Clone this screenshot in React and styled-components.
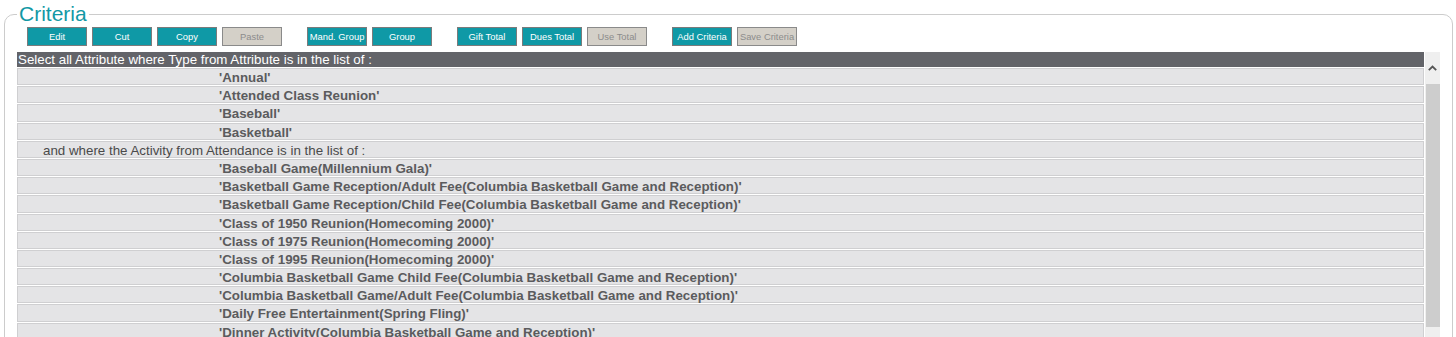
import styled, { createGlobalStyle } from "styled-components"

const Global = createGlobalStyle`
  html, body {
    margin: 0;
    background: #fff;
    overflow: hidden;
    font-family: "Liberation Sans", Arial, sans-serif;
  }
`;

const Frame = styled.fieldset`
  margin: 2px 0 0 4px;
  width: 1423px;
  padding: 0 12px 12px 12px;
  border: 1px solid #cccccc;
  border-radius: 10px;
  min-width: 0;
`;

const Legend = styled.legend`
  padding: 0 2px;
  margin: 0;
  font-size: 21px;
  line-height: 24px;
  color: #1298a5;
`;

const Toolbar = styled.div`
  display: flex;
  gap: 25px;
  margin: 1px 0 6px 10px;
`;

const Group = styled.div`
  display: flex;
  gap: 5px;
`;

const Button = styled.button`
  box-sizing: border-box;
  width: 60px;
  height: 19px;
  padding: 0;
  border: 1px solid ${p => (p.disabled ? "#8a8a8a" : "#7b7b7b")};
  background: ${p => (p.disabled ? "#d4d0c8" : "#0f99a6")};
  color: ${p => (p.disabled ? "#8c8c8c" : "#ffffff")};
  font-family: "Liberation Sans", Arial, sans-serif;
  font-size: 9.4px;
  white-space: nowrap;
  cursor: ${p => (p.disabled ? "default" : "pointer")};
`;

const ListArea = styled.div`
  display: flex;
  height: 300px;
`;

const Rows = styled.div`
  flex: 1;
  display: flex;
  flex-direction: column;
  gap: 1px;
`;

const Header = styled.div`
  height: 15px;
  flex-shrink: 0;
  background: #636469;
  color: #fff;
  font-size: 13.33px;
  line-height: 15px;
  padding-left: 1px;
  white-space: nowrap;
`;

const Row = styled.div`
  height: 15.2px;
  flex-shrink: 0;
  background: #e4e4e6;
  border: 1px solid #cfcfd1;
  font-size: 13.33px;
  line-height: 17px;
  white-space: nowrap;
  padding-left: ${p => (p.$clause ? "25px" : "201px")};
  font-weight: ${p => (p.$clause ? "normal" : "bold")};
  color: ${p => (p.$clause ? "#4a4a4a" : "#5b5b5d")};
`;

const Scrollbar = styled.div`
  width: 15px;
  margin-left: 1px;
  background: #efefef;
  display: flex;
  flex-direction: column;
  align-items: center;
`;

const Arrow = styled.div`
  height: 32px;
  flex-shrink: 0;
  display: flex;
  align-items: center;
  justify-content: center;
`;

const Thumb = styled.div`
  width: 14px;
  height: 243px;
  flex-shrink: 0;
  background: #cdcdcd;
`;

const groups = [
  [["Edit"], ["Cut"], ["Copy"], ["Paste", true]],
  [["Mand. Group"], ["Group"]],
  [["Gift Total"], ["Dues Total"], ["Use Total", true]],
  [["Add Criteria"], ["Save Criteria", true]],
];

const rows = [
  ["'Annual'"],
  ["'Attended Class Reunion'"],
  ["'Baseball'"],
  ["'Basketball'"],
  ["and where the Activity from Attendance is in the list of :", true],
  ["'Baseball Game(Millennium Gala)'"],
  ["'Basketball Game Reception/Adult Fee(Columbia Basketball Game and Reception)'"],
  ["'Basketball Game Reception/Child Fee(Columbia Basketball Game and Reception)'"],
  ["'Class of 1950 Reunion(Homecoming 2000)'"],
  ["'Class of 1975 Reunion(Homecoming 2000)'"],
  ["'Class of 1995 Reunion(Homecoming 2000)'"],
  ["'Columbia Basketball Game Child Fee(Columbia Basketball Game and Reception)'"],
  ["'Columbia Basketball Game/Adult Fee(Columbia Basketball Game and Reception)'"],
  ["'Daily Free Entertainment(Spring Fling)'"],
  ["'Dinner Activity(Columbia Basketball Game and Reception)'"],
  ["'Dinner Dance(Homecoming 2000)'"],
];

export default function App() {
  return (
    <>
      <Global />
      <Frame>
        <Legend>Criteria</Legend>
        <Toolbar>
          {groups.map((g, i) => (
            <Group key={i}>
              {g.map(([label, off]) => (
                <Button key={label} disabled={off}>{label}</Button>
              ))}
            </Group>
          ))}
        </Toolbar>
        <ListArea>
          <Rows>
            <Header>Select all Attribute where Type from Attribute is in the list of :</Header>
            {rows.map(([text, clause], i) => (
              <Row key={i} $clause={clause}>{text}</Row>
            ))}
          </Rows>
          <Scrollbar>
            <Arrow>
              <svg width="9" height="6" viewBox="0 0 9 6">
                <path d="M0.8 5.2 L4.5 1.5 L8.2 5.2" fill="none" stroke="#555" strokeWidth="1.8" />
              </svg>
            </Arrow>
            <Thumb />
          </Scrollbar>
        </ListArea>
      </Frame>
    </>
  )
}
